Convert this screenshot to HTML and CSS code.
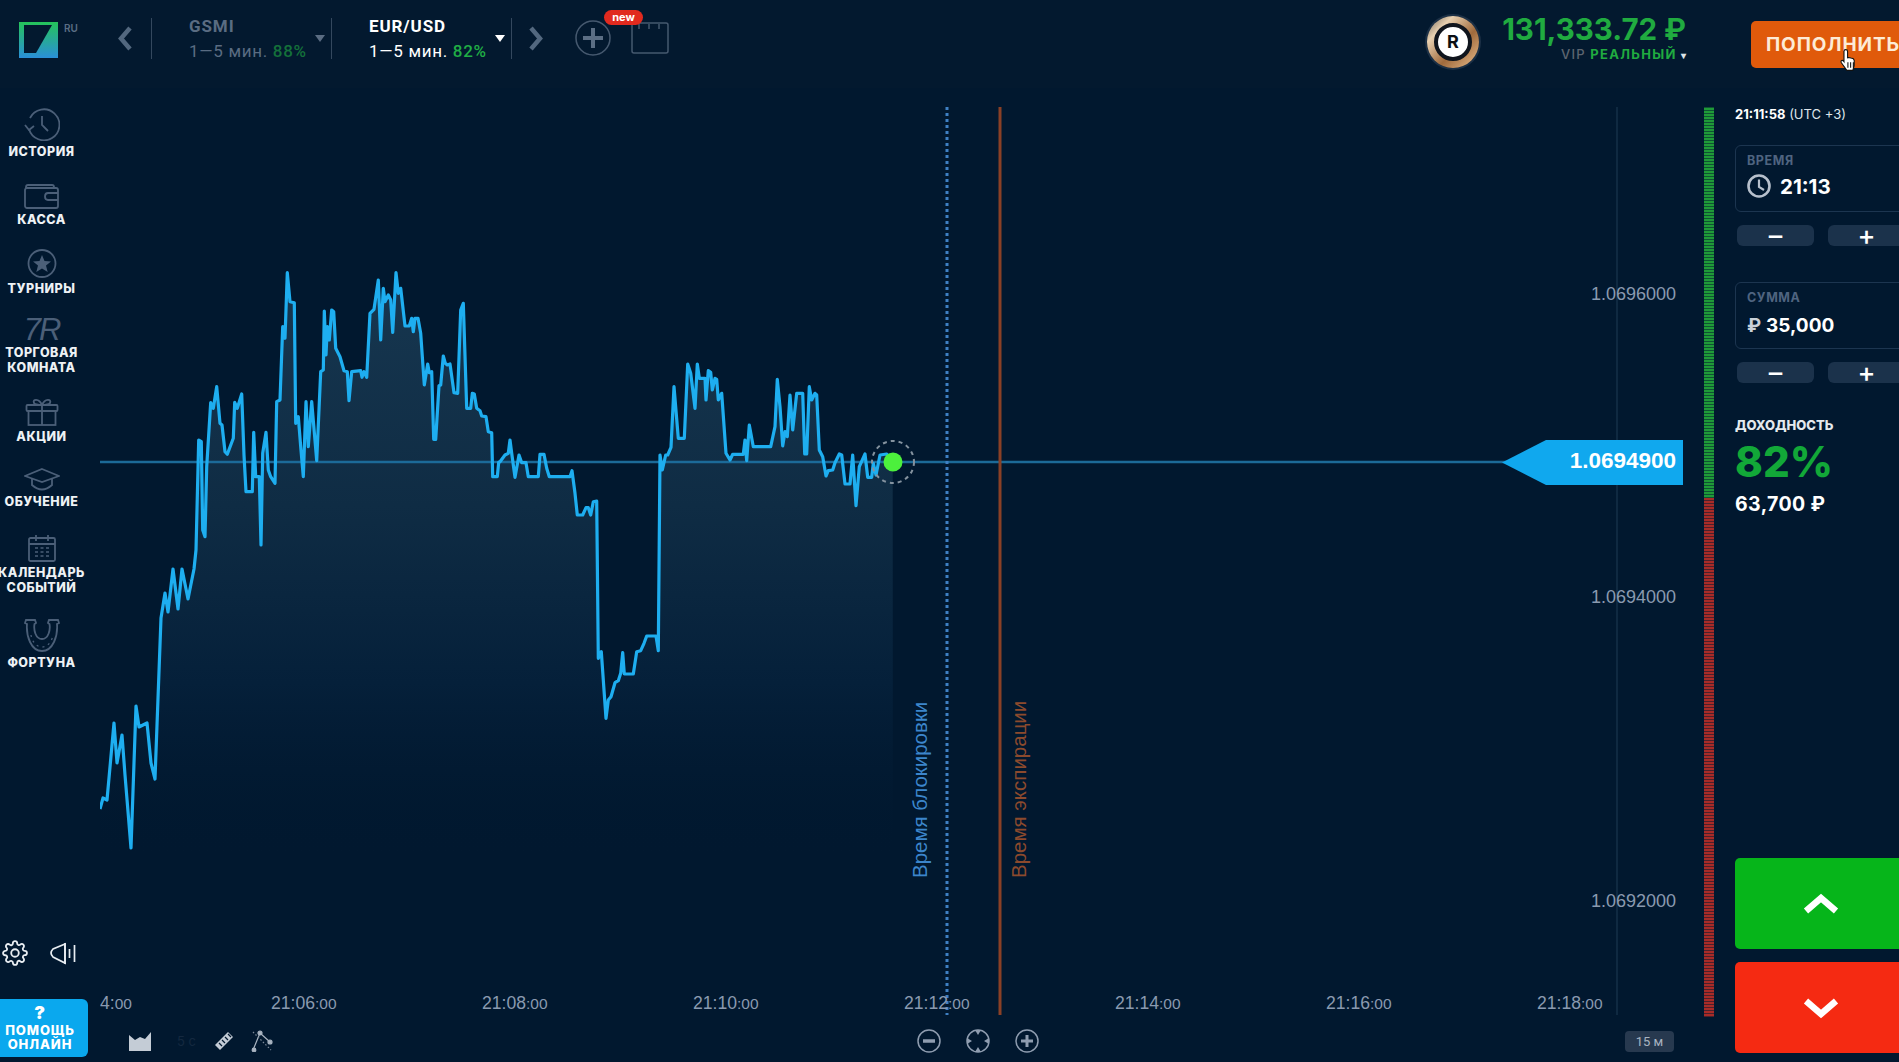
FILE: index.html
```html
<!DOCTYPE html>
<html lang="ru">
<head>
    <meta charset="UTF-8">
    <meta name="viewport" content="width=device-width, initial-scale=1.0">
    <title>Торговая платформа</title>
    <link rel="stylesheet" href="styles.css">
</head>
<body>
    <header class="topbar">
        <svg class="logo" viewBox="0 0 39 36">
            <defs>
                <linearGradient id="logo-grad" x1="0" y1="0" x2="0" y2="1">
                    <stop offset="0" stop-color="#25c45a"/>
                    <stop offset="1" stop-color="#2a8fd8"/>
                </linearGradient>
            </defs>
            <rect width="39" height="36" fill="url(#logo-grad)"/>
            <polygon points="5,3 33,3 17,31 5,31" fill="#03192f"/>
        </svg>
        <span class="lang">RU</span>
        <svg class="nav-arrow" viewBox="0 0 16 27"><polyline points="13,3 4,13.5 13,24" fill="none" stroke="#53687f" stroke-width="4.5"/></svg>
        <div class="assets">
            <div class="asset asset-dim">
                <div>
                    <div class="asset-name">GSMI</div>
                    <div class="asset-info">1—5 мин. <b>88%</b></div>
                </div>
                <span class="caret"></span>
            </div>
            <div class="asset">
                <div>
                    <div class="asset-name">EUR/USD</div>
                    <div class="asset-info">1—5 мин. <b>82%</b></div>
                </div>
                <span class="caret"></span>
            </div>
        </div>
        <svg class="nav-arrow" viewBox="0 0 16 27"><polyline points="3,3 12,13.5 3,24" fill="none" stroke="#53687f" stroke-width="4.5"/></svg>
        <div class="add-wrap">
            <svg class="add-icon" viewBox="0 0 36 36">
                <circle cx="18" cy="18" r="17" fill="none" stroke="#46596f" stroke-width="1.5"/>
                <path d="M18 8v20M8 18h20" stroke="#5b6e84" stroke-width="4"/>
            </svg>
            <span class="new-badge">new</span>
            <svg class="layout-icon" viewBox="0 0 38 32">
                <rect x="1" y="1" width="36" height="30" rx="2" fill="none" stroke="#46596f" stroke-width="1.5"/>
                <path d="M8 2v5M18 2v5M28 2v5" stroke="#46596f" stroke-width="1.5"/>
            </svg>
        </div>

        <div class="account">
            <div class="avatar"><span>R</span></div>
            <div class="balance">
                <div class="balance-sum">131,333.72 ₽</div>
                <div class="balance-type"><span class="vip">VIP</span> <span class="real">РЕАЛЬНЫЙ</span> <span class="small-caret">▾</span></div>
            </div>
            <button class="deposit">ПОПОЛНИТЬ</button>
            <svg class="hand" viewBox="0 0 18 22">
                <path d="M6 1.5c1 0 1.700.7 1.700 1.700V9l1-.3 1 .2 1 .3 1 .2 1.300.5.800 1.500V16l-1.300 4.500H7L2 13.500c-.6-1-.3-1.700.3-2 .7-.3 1.300 0 1.900.7l.2.3V3.200C4.400 2.200 5 1.500 6 1.500z" fill="#fff" stroke="#111" stroke-width="1"/>
                <path d="M8 13v5M10.500 13v5M13 13v5" stroke="#111" stroke-width="1"/>
            </svg>
        </div>
    </header>

    <div class="workspace">
        <nav class="sidebar">
            <a class="nav-item nav-first">
                <svg width="36" height="33" viewBox="0 0 36 33" class="nav-icon">
                    <path d="M5 21a15.500 15.500 0 1 0 1-11" /><path d="M1 17l4 5 5-4" /><path d="M18 8v9l6 6" />
                </svg>
                <span>ИСТОРИЯ</span>
            </a>
            <a class="nav-item nav-tight">
                <svg width="36" height="25" viewBox="0 0 36 25" class="nav-icon">
                    <rect x="1" y="4" width="33" height="20" rx="2"/><path d="M2 5V3q0-2 2-2h24q2 0 2 2v1"/><path d="M34 9H24q-3 0-3 3.500T24 16h10"/>
                </svg>
                <span>КАССА</span>
            </a>
            <a class="nav-item nav-tight">
                <svg width="30" height="29" viewBox="0 0 30 29" class="nav-icon">
                    <circle cx="15" cy="14.500" r="13.500"/>
                    <polygon class="nav-fill" points="15,6 17.500,12 24,12.500 19,16.500 20.700,23 15,19.500 9.300,23 11,16.500 6,12.500 12.500,12"/>
                </svg>
                <span>ТУРНИРЫ</span>
            </a>
            <a class="nav-item nav-tight nav-double">
                <span class="room-mark">7R</span>
                <span>ТОРГОВАЯ<br>КОМНАТА</span>
            </a>
            <a class="nav-item">
                <svg width="34" height="29" viewBox="0 0 34 29" class="nav-icon">
                    <rect x="1.500" y="8" width="31" height="6" rx="1"/><rect x="3.500" y="14" width="27" height="14"/><path d="M17 8v20M17 8c-3-7-10-6-8-2 .7 1.500 4 2 8 2zM17 8c3-7 10-6 8-2-.7 1.500-4 2-8 2z"/>
                </svg>
                <span>АКЦИИ</span>
            </a>
            <a class="nav-item nav-first">
                <svg width="36" height="23" viewBox="0 0 36 23" class="nav-icon">
                    <polygon points="18,1 35,8 18,14 1,8"/><path d="M8 11v6q10 9 20 0v-6"/>
                </svg>
                <span>ОБУЧЕНИЕ</span>
            </a>
            <a class="nav-item nav-double">
                <svg width="28" height="28" viewBox="0 0 28 28" class="nav-icon">
                    <rect x="1" y="4" width="26" height="23" rx="1.500"/><path d="M1 10h26M8 1v6M20 1v6"/>
                    <path class="nav-thin" d="M7 14h3M12.500 14h3M18 14h3M7 18h3M12.500 18h3M18 18h3M7 22h3M12.500 22h3M18 22h3"/>
                </svg>
                <span>КАЛЕНДАРЬ<br>СОБЫТИЙ</span>
            </a>
            <a class="nav-item">
                <svg width="36" height="33" viewBox="0 0 36 33" class="nav-icon">
                    <path d="M2 1h9l1 3-1.500 1c-1 6 1 15 7.500 15s8.500-9 7.500-15L24 4l1-3h9l1 3-2 1c1 12-4 27-15 27S2 17 3 5L1 4z"/>
                    <path class="nav-thin" stroke-dasharray="2 4" d="M7 16c1 6 5 12 11 12s10-6 11-12"/>
                </svg>
                <span>ФОРТУНА</span>
            </a>

            <div class="side-tools">
                <svg width="26" height="26" viewBox="0 0 24 24" fill="none" stroke="#e8edf2" stroke-width="1.700">
                    <circle cx="12" cy="12" r="3.500"/>
                    <path d="M19.400 15a1.650 1.650 0 0 0 .33 1.820l.06.06a2 2 0 0 1 0 2.830 2 2 0 0 1-2.830 0l-.06-.06a1.650 1.650 0 0 0-1.820-.33 1.650 1.650 0 0 0-1 1.510V21a2 2 0 0 1-2 2 2 2 0 0 1-2-2v-.09A1.650 1.650 0 0 0 9 19.400a1.650 1.650 0 0 0-1.820.33l-.06.06a2 2 0 0 1-2.830 0 2 2 0 0 1 0-2.830l.06-.06a1.650 1.650 0 0 0 .33-1.820 1.650 1.650 0 0 0-1.510-1H3a2 2 0 0 1-2-2 2 2 0 0 1 2-2h.09A1.650 1.650 0 0 0 4.600 9a1.650 1.650 0 0 0-.33-1.820l-.06-.06a2 2 0 0 1 0-2.830 2 2 0 0 1 2.830 0l.06.06a1.650 1.650 0 0 0 1.820.33H9a1.650 1.650 0 0 0 1-1.510V3a2 2 0 0 1 2-2 2 2 0 0 1 2 2v.09a1.650 1.650 0 0 0 1 1.510 1.650 1.650 0 0 0 1.820-.33l.06-.06a2 2 0 0 1 2.830 0 2 2 0 0 1 0 2.830l-.06.06a1.650 1.650 0 0 0-.33 1.820V9a1.650 1.650 0 0 0 1.510 1H21a2 2 0 0 1 2 2 2 2 0 0 1-2 2h-.09a1.650 1.650 0 0 0-1.510 1z"/>
                </svg>
                <svg width="28" height="23" viewBox="0 0 28 23" fill="none" stroke="#e8edf2" stroke-width="1.700">
                    <path d="M17 2L5 7q-4 4 0 8l12 6z"/><path d="M17 1v21M21.500 7v9M26.500 3v17"/>
                </svg>
            </div>
            <a class="help">
                <b>?</b>
                <span>ПОМОЩЬ<br>ОНЛАЙН</span>
            </a>
        </nav>

        <main class="chart">
            <svg class="chart-canvas" viewBox="100 88 1595 932">
                <defs>
                    <linearGradient id="area-grad" gradientUnits="userSpaceOnUse" x1="0" y1="270" x2="0" y2="860">
                        <stop offset="0" stop-color="#173750"/>
                        <stop offset="0.4" stop-color="#0f2c44"/>
                        <stop offset="0.7" stop-color="#05203a"/>
                        <stop offset="1" stop-color="#01182f" stop-opacity="0"/>
                    </linearGradient>
                </defs>
                <line x1="1617" y1="107" x2="1617" y2="1015" stroke="#1f3a55" stroke-width="1"/>
                <polygon id="price-area" fill="url(#area-grad)"/>
                <line x1="100" y1="462" x2="1510" y2="462" stroke="#1c6a98" stroke-width="2.500"/>
                <polyline id="price-line" fill="none" stroke="#1eaef0" stroke-width="3.200" stroke-linejoin="round"/>
                <line x1="947" y1="107" x2="947" y2="1015" stroke="#3f80c4" stroke-width="3" stroke-dasharray="3 3"/>
                <line x1="1000" y1="107" x2="1000" y2="1015" stroke="#8a4026" stroke-width="3"/>
                <circle cx="893" cy="462" r="21" fill="none" stroke="#84929f" stroke-width="2" stroke-dasharray="4 4"/>
                <circle cx="893" cy="462" r="9.500" fill="#4cf03c"/>

                <text class="lock-label" transform="translate(927 878) rotate(-90)">Время блокировки</text>
                <text class="expiry-label" transform="translate(1026 878) rotate(-90)">Время экспирации</text>

                <text class="price-label" x="1676" y="300">1.0696000</text>
                <text class="price-label" x="1676" y="603">1.0694000</text>
                <text class="price-label" x="1676" y="907">1.0692000</text>

                <text class="time-label" x="100" y="1009">4:<tspan>00</tspan></text>
                <text class="time-label" x="271" y="1009">21:06<tspan>:00</tspan></text>
                <text class="time-label" x="482" y="1009">21:08<tspan>:00</tspan></text>
                <text class="time-label" x="693" y="1009">21:10<tspan>:00</tspan></text>
                <text class="time-label" x="904" y="1009">21:12<tspan>:00</tspan></text>
                <text class="time-label" x="1115" y="1009">21:14<tspan>:00</tspan></text>
                <text class="time-label" x="1326" y="1009">21:16<tspan>:00</tspan></text>
                <text class="time-label" x="1537" y="1009">21:18<tspan>:00</tspan></text>
            </svg>
            <div class="price-tag">1.0694900</div>

            <div class="chart-tools">
                <div class="tools-left">
                    <svg width="22" height="19" viewBox="0 0 22 19"><path d="M0 3l6 5 5-3 5 2 6-7v19H0z" fill="#c4ccd6"/></svg>
                    <span class="interval">5 с</span>
                    <svg width="22" height="22" viewBox="0 0 22 22"><path d="M2 15L15 2l5 5L7 20z" fill="#c4ccd6"/><path d="M6 13l3 3M9 10l3 3M12 7l3 3M15 4l3 3" stroke="#03192f" stroke-width="1.300"/></svg>
                    <svg width="22" height="22" viewBox="0 0 22 22" fill="none" stroke="#a9b4c1" stroke-width="1.200"><path d="M2 20L9 3l10 9"/><path d="M2 2l18 18" stroke-dasharray="1.500 2" stroke="#7d8a99"/><circle cx="9" cy="3" r="2" fill="#a9b4c1"/><circle cx="19" cy="12" r="2" fill="#a9b4c1"/><circle cx="3" cy="20" r="1.800" fill="#a9b4c1"/></svg>
                </div>
                <div class="tools-zoom">
                    <svg width="24" height="24" viewBox="0 0 24 24" fill="none" stroke="#8f9db0" stroke-width="1.500"><circle cx="12" cy="12" r="11"/><path d="M6 12h12" stroke-width="3.500"/></svg>
                    <svg width="24" height="24" viewBox="0 0 24 24" fill="none" stroke="#8f9db0" stroke-width="1.500"><circle cx="12" cy="12" r="11"/><path d="M12 6l-3-5h6zM12 18l-3 5h6zM6 12l-5-3v6zM18 12l5-3v6z" fill="#8f9db0" stroke="none"/></svg>
                    <svg width="24" height="24" viewBox="0 0 24 24" fill="none" stroke="#8f9db0" stroke-width="1.500"><circle cx="12" cy="12" r="11"/><path d="M6 12h12M12 6v12" stroke-width="3"/></svg>
                </div>
                <span class="scale">15 м</span>
            </div>
        </main>

        <div class="level-bar"></div>

        <aside class="ticket">
            <div class="clock"><b>21:11:58</b> (UTC +3)</div>

            <div class="field">
                <div class="field-label">ВРЕМЯ</div>
                <div class="field-value">
                    <svg width="24" height="24" viewBox="0 0 24 24" fill="none" stroke="#b7c0cc" stroke-width="2.600"><circle cx="12" cy="12" r="10.500"/><path d="M12 5.500V13l5 3" stroke-width="2.200"/></svg>
                    <span class="time-value">21:13</span>
                </div>
            </div>
            <div class="stepper">
                <button>–</button>
                <button>+</button>
            </div>

            <div class="field field-sum">
                <div class="field-label">СУММА</div>
                <div class="field-value"><span class="rub">₽</span> 35,000</div>
            </div>
            <div class="stepper">
                <button>–</button>
                <button>+</button>
            </div>

            <div class="profit-label">ДОХОДНОСТЬ</div>
            <div class="profit-percent">82%</div>
            <div class="profit-sum">63,700 ₽</div>

            <button class="trade trade-up">
                <svg width="36" height="22" viewBox="0 0 36 22"><polyline points="3,18 18,5 33,18" fill="none" stroke="#fff" stroke-width="6.500"/></svg>
            </button>
            <button class="trade trade-down">
                <svg width="36" height="22" viewBox="0 0 36 22"><polyline points="3,4 18,17 33,4" fill="none" stroke="#fff" stroke-width="6.500"/></svg>
            </button>
        </aside>
    </div>

    <script src="chart.js"></script>
</body>
</html>
```

FILE: styles.css
```css
* {
    box-sizing: border-box;
}
html, body {
    height: 100%;
}
body {
    margin: 0;
    width: 1899px;
    height: 1062px;
    overflow: hidden;
    background-color: #01182f;
    color: #fff;
    font-family: Inter, "Noto Sans", sans-serif;
}
button {
    border: none;
    font-family: inherit;
    color: #fff;
    cursor: pointer;
}

/* top bar */
.topbar {
    height: 88px;
    display: flex;
    align-items: flex-start;
    padding: 18px 0 0 19px;
    background-color: #03192f;
    position: relative;
}
.logo {
    width: 39px;
    height: 36px;
    margin-top: 4px;
}
.lang {
    margin: 4px 0 0 6px;
    width: 53px;
    font-size: 10px;
    font-weight: 600;
    color: #5b6e84;
}
.nav-arrow {
    width: 16px;
    height: 27px;
    margin-top: 7px;
}
.assets {
    display: flex;
    margin: 0 16px 0 18px;
    border-right: 1px solid #34485e;
}
.asset {
    width: 180px;
    height: 41px;
    padding: 0 6px 0 37px;
    border-left: 1px solid #34485e;
    display: flex;
    justify-content: space-between;
    font-family: Roboto, sans-serif;
}
.asset-name {
    font-size: 17px;
    font-weight: 700;
    line-height: 17px;
    letter-spacing: .9px;
}
.asset-info {
    margin-top: 8px;
    font-size: 17px;
    line-height: 17px;
    letter-spacing: .7px;
}
.asset-info b {
    color: #20ad45;
    font-weight: 500;
}
.asset-dim .asset-name,
.asset-dim .asset-info {
    color: #5a6c82;
}
.asset-dim .asset-info b {
    color: #14703a;
}
.caret {
    width: 0;
    height: 0;
    margin-top: 17px;
    border-left: 5px solid transparent;
    border-right: 5px solid transparent;
    border-top: 7px solid #fff;
}
.asset-dim .caret {
    border-top-color: #5a6c82;
}
.add-wrap {
    position: relative;
    margin-left: 31px;
    display: flex;
    gap: 20px;
    align-items: flex-start;
}
.add-icon {
    width: 36px;
    height: 36px;
    margin-top: 2px;
}
.layout-icon {
    width: 38px;
    height: 32px;
    margin-top: 4px;
}
.new-badge {
    position: absolute;
    left: 29px;
    top: -8px;
    width: 39px;
    height: 15px;
    background-color: #e12a1f;
    border-radius: 8px;
    font-size: 11px;
    font-weight: 700;
    line-height: 14px;
    text-align: center;
}
.account {
    margin-left: auto;
    width: 472px;
    display: flex;
    align-items: flex-start;
    position: relative;
}
.avatar {
    width: 52px;
    height: 52px;
    border-radius: 50%;
    margin-top: -2px;
    background: linear-gradient(135deg, #6d6255, #e8d0b0 25%, #a06a3c 60%, #d0a070 85%, #5c4a38);
    display: flex;
    align-items: center;
    justify-content: center;
    box-shadow: 0 0 0 2px #1c3046;
}
.avatar span {
    width: 38px;
    height: 38px;
    border-radius: 50%;
    background-color: #fff;
    border: 4px solid #10151d;
    color: #0b0f14;
    font-size: 18px;
    font-weight: 700;
    line-height: 30px;
    text-align: center;
}
.balance {
    margin-left: 21px;
    width: 186px;
    margin-top: -4px;
    display: flex;
    flex-direction: column;
    align-items: flex-end;
}
.balance-sum {
    font-size: 29.500px;
    font-weight: 700;
    line-height: 30px;
    white-space: nowrap;
    color: #20ab40;
}
.balance-type {
    margin-top: 3px;
    font-size: 13px;
    line-height: 14px;
    font-weight: 700;
    letter-spacing: 1.3px;
    white-space: nowrap;
}
.vip {
    color: #5d6570;
    font-weight: 500;
}
.real {
    color: #20ab40;
}
.small-caret {
    font-size: 10px;
    color: #dde3e8;
    letter-spacing: 0;
}
.deposit {
    position: absolute;
    left: 324px;
    top: 3px;
    width: 160px;
    height: 47px;
    padding: 0 0 0 15px;
    text-align: left;
    background-color: #e05a0b;
    border-radius: 5px;
    font-size: 19px;
    font-weight: 700;
    letter-spacing: .9px;
    color: #fdebd6;
}
.hand {
    position: absolute;
    left: 412px;
    top: 30px;
    width: 20px;
    height: 24px;
}

/* main area */
.workspace {
    height: 974px;
    display: flex;
}

/* left navigation */
.sidebar {
    width: 100px;
    flex: none;
    display: flex;
    flex-direction: column;
    padding: 20px 0 5px;
}
.nav-item {
    display: flex;
    flex-direction: column;
    align-items: center;
    gap: 4px;
    width: 83px;
    margin-bottom: 24px;
    font-size: 12.500px;
    font-weight: 800;
    line-height: 14px;
    letter-spacing: .5px;
    text-align: center;
    color: #eef2f5;
    white-space: nowrap;
}
.nav-first {
    margin-bottom: 25px;
}
.nav-tight {
    margin-bottom: 22px;
}
.nav-double {
    line-height: 14.500px;
}
.nav-icon {
    fill: none;
    stroke: #4b5f78;
    stroke-width: 1.800;
}
.nav-icon .nav-fill {
    fill: #4b5f78;
    stroke: none;
}
.nav-icon .nav-thin {
    stroke-width: 1.300;
}
.room-mark {
    font-family: "Liberation Sans", sans-serif;
    font-style: italic;
    font-weight: 400;
    font-size: 31px;
    line-height: 24px;
    letter-spacing: -2px;
    color: #4b5f78;
}
.side-tools {
    margin-top: auto;
    display: flex;
    align-items: center;
    gap: 20px;
    padding-left: 2px;
    margin-bottom: 33px;
}
.help {
    width: 88px;
    height: 58px;
    flex: none;
    padding-right: 8px;
    background-color: #0aa8ee;
    border-radius: 0 6px 6px 0;
    display: flex;
    flex-direction: column;
    align-items: center;
    font-size: 13px;
    font-weight: 800;
    line-height: 13.500px;
    letter-spacing: .9px;
    text-align: center;
}
.help b {
    font-size: 18px;
    line-height: 22px;
    margin-top: 3px;
}

/* chart */
.chart {
    width: 1595px;
    flex: none;
    position: relative;
    display: flex;
    flex-direction: column;
}
.chart-canvas {
    display: block;
    width: 1595px;
    height: 932px;
}
.lock-label,
.expiry-label {
    font-family: "Liberation Sans", sans-serif;
    font-size: 20.500px;
}
.lock-label {
    fill: #3c86cc;
}
.expiry-label {
    fill: #8c4a2d;
}
.price-label {
    font-family: "Liberation Sans", sans-serif;
    font-size: 18px;
    text-anchor: end;
    fill: #8a9ab0;
}
.time-label {
    font-family: "Liberation Sans", sans-serif;
    font-size: 17.600px;
    fill: #8a9ab0;
}
.time-label tspan {
    font-size: 15.500px;
}
.price-tag {
    position: absolute;
    left: 1402px;
    top: 352px;
    width: 181px;
    height: 45px;
    padding-right: 7px;
    background-color: #10a8ee;
    clip-path: polygon(0 50%, 44px 0, 100% 0, 100% 100%, 44px 100%);
    font-family: "Liberation Sans", sans-serif;
    font-size: 22.500px;
    font-weight: 700;
    line-height: 42px;
    text-align: right;
}
.chart-tools {
    height: 42px;
    display: flex;
    align-items: center;
    padding-left: 29px;
}
.tools-left {
    width: 188px;
    display: flex;
    align-items: center;
    gap: 26px;
}
.tools-left svg + svg {
    margin-left: -10px;
}
.interval {
    font-size: 13px;
    width: 10px;
    white-space: nowrap;
    color: #14283f;
}
.tools-zoom {
    margin-left: 600px;
    display: flex;
    gap: 25px;
}
.scale {
    margin-left: 586px;
    width: 49px;
    height: 21px;
    background-color: #27394f;
    border-radius: 4px;
    font-family: Roboto, sans-serif;
    font-size: 13px;
    line-height: 21px;
    text-align: center;
    color: #a9b4c1;
}

/* level bar */
.level-bar {
    width: 10px;
    flex: none;
    height: 910px;
    margin: 19px 21px 0 9px;
    background:
        repeating-linear-gradient(rgba(1, 24, 47, .55) 0, rgba(1, 24, 47, .55) 1px, transparent 1px, transparent 3px),
        linear-gradient(#1f9a38 0, #1f9a38 43%, #a82b28 43%, #a82b28 100%);
}

/* trade ticket */
.ticket {
    width: 172px;
    flex: none;
    display: flex;
    flex-direction: column;
    padding: 19px 0 9px;
}
.clock {
    font-size: 13px;
    line-height: 14px;
    white-space: nowrap;
    color: #dfe5ea;
}
.clock b {
    color: #fff;
}
.field {
    margin-top: 24px;
    height: 67px;
    padding: 8px 11px;
    border: 1px solid #1c3550;
    border-radius: 6px;
}
.field-sum {
    margin-top: 36px;
}
.field-label {
    font-size: 12.500px;
    font-weight: 700;
    line-height: 14px;
    letter-spacing: .6px;
    color: #4f6480;
}
.field-value {
    margin-top: 5px;
    display: flex;
    align-items: center;
    gap: 5px;
    height: 26px;
    font-size: 19px;
    font-weight: 700;
}
.field-sum .field-value {
    margin-top: 7px;
}
.time-value {
    margin-left: 4px;
    font-size: 20.500px;
}
.rub {
    color: #c9d0d8;
}
.stepper {
    margin-top: 13px;
    display: flex;
    gap: 14px;
    padding-left: 2px;
}
.stepper button {
    width: 77px;
    height: 21px;
    padding: 0;
    background-color: #1b324b;
    border-radius: 6px;
    font-size: 27px;
    font-weight: 500;
    line-height: 19px;
}
.profit-label {
    margin-top: 35px;
    font-size: 13px;
    font-weight: 800;
    line-height: 14px;
    color: #e4e9ee;
}
.profit-percent {
    margin-top: 9px;
    font-size: 42px;
    font-weight: 800;
    line-height: 42px;
    color: #12a838;
}
.profit-sum {
    margin-top: 10px;
    font-size: 19.500px;
    font-weight: 700;
    line-height: 22px;
    letter-spacing: .4px;
}
.trade {
    height: 91px;
    flex: none;
    border-radius: 5px;
    display: flex;
    align-items: center;
    justify-content: center;
    padding: 0;
}
.trade-up {
    margin-top: auto;
    background-color: #06b51a;
}
.trade-down {
    margin-top: 13px;
    background-color: #f52a12;
}
```

FILE: chart.js
```javascript
// traced points, page pixels: [x, y]
const start = [
    [100, 809], [103, 798], [107, 800], [114, 723], [117, 763], [122, 735], [125, 775], [131, 848],
    [136, 706], [139, 727], [147, 723], [151, 763], [155, 779], [161, 618], [165, 593], [168, 612],
    [173, 569], [178, 609], [182, 569], [188, 599], [194, 569]
];

// 3x crop taken at 90,250
const middle = [
    318,900, 326,570, 334,575, 338,840, 345,860, 350,650, 362,458, 370,475, 380,410, 390,520, 396,525,
    405,605, 412,613, 430,565, 434,457, 442,475, 455,432, 462,615, 468,725, 487,725, 491,547, 497,680,
    508,680, 513,885, 518,610, 528,547, 535,660, 542,680, 555,700, 560,455, 570,450, 578,230, 585,265,
    592,68, 600,155, 613,158, 617,520, 625,500, 632,590, 640,680, 648,455, 655,590, 665,455, 680,632,
    692,365, 700,360, 703,183, 708,315, 712,230, 718,270, 725,180, 731,185, 737,295, 750,320, 762,362,
    772,365, 777,452, 785,365, 812,362, 816,382, 822,365, 830,382, 840,190, 852,178, 865,90, 872,270,
    880,115, 885,155, 895,135, 902,150, 908,247, 918,68, 925,130, 932,115, 945,228, 958,228, 965,205,
    970,245, 975,205, 984,205, 992,250, 1003,405, 1013,342, 1018,368, 1025,365, 1031,568, 1037,568,
    1047,407, 1052,405, 1060,318, 1066,340, 1072,345, 1080,342, 1092,428, 1103,430, 1112,180, 1120,160,
    1130,475, 1142,475, 1147,430, 1153,432, 1160,475, 1170,482, 1175,498, 1188,500, 1195,545, 1205,548,
    1208,680, 1222,680, 1226,637
];

// 3x crop taken at 500,340
const end = [
    0,365, 15,345, 25,340, 30,300, 35,340, 45,412, 57,345, 65,368, 78,368, 85,410, 115,410, 120,343,
    132,343, 140,385, 148,410, 210,410, 216,392, 225,460, 232,525, 248,525, 258,503, 265,503, 272,525,
    280,485, 290,483, 295,955, 304,935, 318,1135, 325,1080, 333,1070, 345,1028, 355,1022, 362,1000,
    368,938, 373,1002, 400,1002, 410,935, 422,932, 432,910, 440,888, 468,888, 475,932, 480,345, 487,390,
    497,345, 503,345, 513,322, 522,140, 535,295, 553,295, 563,72, 572,100, 585,205, 592,72, 598,115,
    615,115, 618,180, 625,92, 632,97, 637,150, 645,115, 650,118, 655,180, 665,160, 678,340, 690,360,
    698,343, 730,343, 735,300, 740,362, 748,255, 760,320, 812,320, 825,260, 832,118, 840,200, 848,318,
    855,275, 862,290, 870,165, 878,270, 890,160, 908,160, 914,342, 920,342, 928,140, 935,180, 945,160,
    950,165, 958,330, 968,350, 978,408, 985,392, 998,390, 1005,368, 1018,342, 1025,345, 1035,432,
    1050,432, 1058,345, 1068,497, 1078,380, 1095,342, 1103,412, 1115,412, 1120,370, 1128,405, 1140,345,
    1160,342, 1178,366
];

function fromCrop(list, left, top) {
    const out = [];
    for (let i = 0; i < list.length; i += 2) {
        out.push([left + list[i] / 3, top + list[i + 1] / 3]);
    }
    return out;
}

const points = start.concat(fromCrop(middle, 90, 250), fromCrop(end, 500, 340));
const line = points.map(p => p[0].toFixed(1) + "," + p[1].toFixed(1)).join(" ");

document.getElementById("price-line").setAttribute("points", line);
document.getElementById("price-area").setAttribute("points", line + " 893,1020 100,1020");
```
